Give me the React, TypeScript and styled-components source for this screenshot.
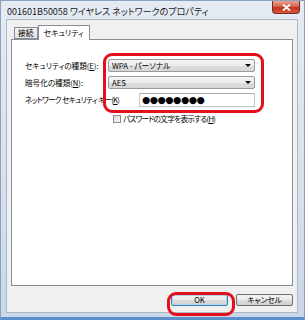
import React from "react";
import styled, { createGlobalStyle } from "styled-components";

const Global = createGlobalStyle`
  html, body { margin: 0; padding: 0; background: #ffffff; }
  body { font-family: "Noto Sans CJK JP", "Noto Sans", sans-serif; }
  * { box-sizing: border-box; }
`;

const Window = styled.div`
  position: relative;
  width: 305px;
  height: 320px;
  display: flex;
  flex-direction: column;
  padding: 0 6px 4px 5px;
  background: linear-gradient(180deg, #e4ebf3 0%, #d6e1ec 60%, #c9d7e6 100%);
  border: 1px solid #8aa2bd;
  border-bottom: 3px solid #5b8fc9;
`;

const TitleBar = styled.div`
  height: 18px;
  display: flex;
  align-items: flex-start;
  justify-content: space-between;
`;

const TitleText = styled.div`
  font-size: 9px;
  line-height: 1;
  color: #1a1a1a;
  padding: 6px 0 0 1px;
  white-space: nowrap;
  font-feature-settings: "palt";
`;

const CloseButton = styled.div`
  width: 28px;
  height: 13px;
  margin-right: -2px;
  border: 1px solid #7a2a24;
  border-top: none;
  border-radius: 0 0 4px 4px;
  background: linear-gradient(180deg, #e9a493 0%, #d4664f 45%, #c0341f 55%, #d8573d 100%);
  display: flex;
  align-items: center;
  justify-content: center;
`;

const Body = styled.div`
  flex: 1;
  display: flex;
  flex-direction: column;
  background: #f0f0f0;
  border: 1px solid #aab8c8;
  padding: 4px 4px 0 4px;
`;

const TabRow = styled.div`
  height: 15px;
  display: flex;
  align-items: flex-end;
  padding-left: 3px;
`;

const Tab = styled.div<{ $active?: boolean }>`
  height: ${(p) => (p.$active ? "15px" : "12px")};
  padding: 0 ${(p) => (p.$active ? "5px" : "3px")};
  margin-bottom: ${(p) => (p.$active ? "-1px" : "0")};
  display: flex;
  align-items: center;
  font-size: 7.8px;
  line-height: 1;
  font-feature-settings: "palt";
  background: ${(p) => (p.$active ? "#ffffff" : "linear-gradient(180deg, #f2f2f2, #e3e3e3)")};
  border: 1px solid #898c95;
  border-bottom: ${(p) => (p.$active ? "none" : "1px solid #898c95")};
  position: relative;
  z-index: ${(p) => (p.$active ? 2 : 1)};
`;

const Panel = styled.div`
  flex: 1;
  background: #ffffff;
  border: 1px solid #898c95;
  padding: 19px 37px 0 13px;
  display: flex;
  flex-direction: column;
  gap: 4px;
`;

const Row = styled.div`
  height: 13px;
  display: flex;
  align-items: center;
`;

const Label = styled.div<{ $tight?: boolean }>`
  font-size: 7.6px;
  line-height: 1;
  white-space: nowrap;
  font-feature-settings: "palt";
  letter-spacing: ${(p) => (p.$tight ? "-0.7px" : "0")};
  color: #000;
`;

const Select = styled.div`
  margin-left: auto;
  width: 147px;
  height: 13px;
  border: 1px solid #9a9a9a;
  border-radius: 2px;
  background: linear-gradient(180deg, #f4f4f4 0%, #ececec 50%, #dcdcdc 51%, #d6d6d6 100%);
  display: flex;
  align-items: center;
  justify-content: space-between;
  padding: 0 3px 0 3px;
  font-size: 7.8px;
  line-height: 1;
  font-feature-settings: "palt";
`;

const Arrow = styled.div`
  width: 0;
  height: 0;
  border-left: 3px solid transparent;
  border-right: 3px solid transparent;
  border-top: 3px solid #000;
`;

const KeyInput = styled.div`
  margin-left: auto;
  width: 116px;
  height: 14px;
  border: 1px solid #c6c6c6;
  border-top-color: #abadb3;
  background: #fff;
  display: flex;
  align-items: center;
  padding-left: 2px;
  font-family: "DejaVu Sans", sans-serif;
  font-size: 9.4px;
  letter-spacing: -0.4px;
  line-height: 1;
`;

const CheckRow = styled.div`
  display: flex;
  align-items: center;
  gap: 2px;
  margin-top: 5px;
  padding-left: 88px;
`;

const CheckBox = styled.div`
  width: 8px;
  height: 8px;
  border: 1px solid #8f8f8f;
  background: linear-gradient(135deg, #dcdcdc, #f8f8f8);
`;

const ButtonRow = styled.div`
  height: 26px;
  display: flex;
  align-items: center;
  justify-content: flex-end;
  gap: 8px;
  padding-top: 1px;
`;

const Button = styled.div<{ $default?: boolean }>`
  width: 57px;
  height: 12px;
  border: 1px solid ${(p) => (p.$default ? "#3c7fb1" : "#707070")};
  border-radius: 2px;
  background: linear-gradient(180deg, #f2f2f2 0%, #ebebeb 50%, #dddddd 51%, #cfcfcf 100%);
  display: flex;
  align-items: center;
  justify-content: center;
  font-size: 7.6px;
  line-height: 1;
  font-feature-settings: "palt";
  box-shadow: ${(p) => (p.$default ? "inset 0 0 0 1px #a8d8f0" : "none")};
`;

const Highlight = styled.div`
  position: absolute;
  border: 3.5px solid #e3101c;
  border-radius: 9px;
  pointer-events: none;
`;

export default function App() {
  return (
    <>
      <Global />
      <Window>
        <TitleBar>
          <TitleText>001601B50058 ワイヤレス ネットワークのプロパティ</TitleText>
          <CloseButton>
            <svg width="9" height="7" viewBox="0 0 9 7">
              <path d="M1 0.5 L8 6.5 M8 0.5 L1 6.5" stroke="#ffffff" strokeWidth="1.8" />
            </svg>
          </CloseButton>
        </TitleBar>
        <Body>
          <TabRow>
            <Tab>接続</Tab>
            <Tab $active>セキュリティ</Tab>
          </TabRow>
          <Panel>
            <Row>
              <Label>セキュリティの種類(<u>E</u>):</Label>
              <Select>
                <span>WPA - パーソナル</span>
                <Arrow />
              </Select>
            </Row>
            <Row>
              <Label>暗号化の種類(<u>N</u>):</Label>
              <Select>
                <span>AES</span>
                <Arrow />
              </Select>
            </Row>
            <Row>
              <Label $tight>ネットワーク セキュリティ キー(<u>K</u>)</Label>
              <KeyInput>●●●●●●●●</KeyInput>
            </Row>
            <CheckRow>
              <CheckBox />
              <Label $tight>パスワードの文字を表示する(<u>H</u>)</Label>
            </CheckRow>
          </Panel>
          <ButtonRow>
            <Button $default>OK</Button>
            <Button>キャンセル</Button>
          </ButtonRow>
        </Body>
        <Highlight style={{ left: 102, top: 52, width: 161, height: 60 }} />
        <Highlight style={{ left: 166, top: 291, width: 68, height: 24 }} />
      </Window>
    </>
  );
}
